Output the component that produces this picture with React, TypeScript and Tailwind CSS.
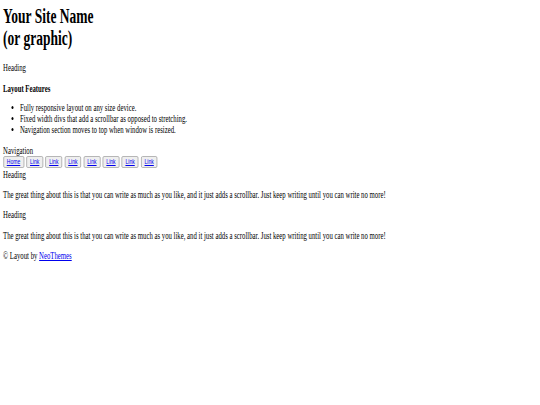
import React from "react";

const serif = "font-['Liberation_Serif','Times_New_Roman',serif]";

function NavButton({ label }: { label: string }) {
  return (
    <span className="inline-flex h-[12px] items-center justify-center rounded-[2px] border border-[#a9a9a9] bg-[#efefef] px-[4.5px] font-['Liberation_Sans',Arial,sans-serif] text-[7.5px] leading-none">
      <a href="#" className="text-[#0000ee] underline">
        {label}
      </a>
    </span>
  );
}

export default function App() {
  const para =
    "The great thing about this is that you can write as much as you like, and it just adds a scrollbar. Just keep writing until you can write no more!";
  return (
    <div className="h-[405px] w-[540px] overflow-hidden bg-white">
      <div
        className={`${serif} w-[800px] origin-top-left scale-x-[0.675] pl-[4.5px] pt-[5px] text-[10px] leading-[11px] text-black`}
      >
        <h1 className="text-[20px] font-bold leading-[22px]">
          Your Site Name
          <br />
          (or graphic)
        </h1>
        <div className="mt-[13px]">Heading</div>
        <div className="mt-[10px] font-bold">Layout Features</div>
        <ul className="mt-[8px] list-disc pl-[25px]">
          <li>Fully responsive layout on any size device.</li>
          <li>Fixed width divs that add a scrollbar as opposed to stretching.</li>
          <li>Navigation section moves to top when window is resized.</li>
        </ul>
        <div className="mt-[10px]">Navigation</div>
        <div className="flex gap-[3.5px]">
          <NavButton label="Home" />
          <NavButton label="Link" />
          <NavButton label="Link" />
          <NavButton label="Link" />
          <NavButton label="Link" />
          <NavButton label="Link" />
          <NavButton label="Link" />
          <NavButton label="Link" />
        </div>
        <div className="mt-[1px]">Heading</div>
        <p className="mt-[9px]">{para}</p>
        <div className="mt-[9px]">Heading</div>
        <p className="mt-[10px]">{para}</p>
        <p className="mt-[9px]">
          © Layout by{" "}
          <a href="#" className="text-[#0000ee] underline">
            NeoThemes
          </a>
        </p>
      </div>
    </div>
  );
}
